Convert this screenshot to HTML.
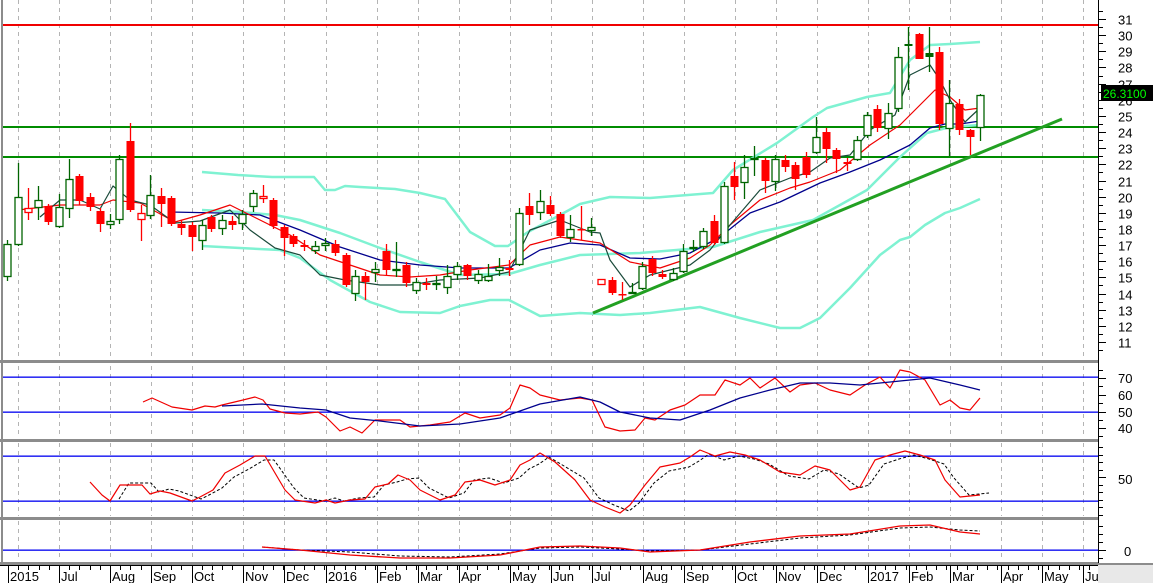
<!DOCTYPE html>
<html><head><meta charset="utf-8"><style>
html,body{margin:0;padding:0;background:#fff;}
svg{display:block;font-family:"Liberation Sans",Arial,sans-serif;}
</style></head><body>
<svg id="c" width="1153" height="583" xmlns="http://www.w3.org/2000/svg">
<rect width="1153" height="583" fill="#fff"/>
<g id="grid"></g>
<g id="lines"></g>
<g id="cand"></g>
<g id="axis"></g>
</svg>
<script>
const NS="http://www.w3.org/2000/svg";
function el(p,t,a,txt){const e=document.createElementNS(NS,t);for(const k in a)e.setAttribute(k,a[k]);if(txt!==undefined)e.textContent=txt;document.getElementById(p).appendChild(e);return e;}
function pl(pts,col,w,dash){el('lines','polyline',{points:pts.map(p=>p.join(',')).join(' '),fill:'none',stroke:col,'stroke-width':w,'stroke-dasharray':dash||'none','stroke-linejoin':'round'});}
// gridlines
const gx=[18,59,110,151,192,243,284,326,377,418,459,510,551,592,643,684,735,776,817,868,909,950,1001,1042,1083];
[[0,360],[366,437],[443,516],[521,561]].forEach(r=>{gx.forEach(x=>el('grid','line',{x1:x+.5,x2:x+.5,y1:r[0],y2:r[1],stroke:'#b4b4b4','stroke-dasharray':'4,4'}));});
// panel separators
[[361],[440],[518],[563]].forEach(y=>el('grid','rect',{x:0,y:y[0]-1,width:1153,height:3,fill:'#8c8c8c'}));
el('grid','rect',{x:1,y:0,width:2,height:583,fill:'#8c8c8c'});
// horizontal levels
el('lines','rect',{x:3,y:24,width:1095,height:2,fill:'#f00000'});
el('lines','rect',{x:3,y:126,width:1095,height:2,fill:'#008c00'});
el('lines','rect',{x:3,y:156,width:1095,height:2,fill:'#008c00'});
// indicator levels
[377,412,456,501,550].forEach(y=>el('lines','rect',{x:3,y:y-0.5,width:1095,height:1.3,fill:'#0000f0'}));
// bands
const aq='#7ff2d2';
pl([[202,172],[238,175],[272,177],[314,177],[325,190],[335,190],[345,186],[360,187],[395,189],[420,193],[445,199],[470,232],[495,246],[508,246],[528,232],[560,215],[580,204],[610,197],[650,198],[713,193],[733,170],[777,143],[813,117],[827,108],[867,97],[890,93],[910,60],[930,45],[950,44],[980,42]],aq,2.5);
pl([[202,210],[240,212],[275,215],[300,220],[340,233],[380,248],[420,262],[460,275],[509,274],[540,265],[580,255],[640,253],[713,247],[760,232],[813,220],[867,190],[900,157],[927,133],[950,127],[980,125]],aq,2.5);
pl([[202,246],[240,248],[280,250],[300,258],[330,280],[370,302],[400,312],[440,313],[460,306],[490,300],[509,300],[540,316],[580,313],[620,315],[650,313],[700,307],[740,318],[780,328],[800,328],[820,318],[850,288],[880,255],[900,240],[910,237],[925,225],[945,213],[960,208],[980,199]],aq,2.5);
// MAs
pl([[170,212],[220,213],[260,215],[300,230],[340,247],[380,260],[420,265],[460,268],[509,268],[540,250],[570,243],[600,245],[630,258],[660,259],[690,253],[720,237],[750,213],[780,202],[820,183],[850,172],[880,160],[910,145],[930,128],[945,124],[960,124],[980,121]],'#00008c',1.3);
pl([[18,210],[60,205],[100,205],[113,200],[140,203],[175,222],[200,215],[230,205],[260,220],[290,235],[320,255],[350,265],[380,275],[410,277],[440,275],[470,270],[509,265],[530,245],[560,237],[600,243],[630,262],[660,268],[690,258],[710,245],[730,225],[760,200],[790,188],[810,182],[840,170],[870,145],[900,125],[920,105],[935,90],[950,97],[965,110],[980,108]],'#f00000',1.2);
pl([[40,217],[60,200],[80,200],[100,209],[113,186],[130,200],[150,205],[175,223],[200,221],[230,210],[250,230],[275,248],[300,255],[320,275],[345,280],[380,285],[410,285],[440,280],[480,278],[509,272],[530,230],[560,220],[590,232],[600,233],[610,260],[630,287],[650,275],[690,265],[710,250],[730,225],[760,190],[790,178],[810,172],[830,158],[850,155],[870,130],[895,115],[910,75],[930,65],[940,80],[950,100],[965,122],[980,108]],'#1a4a3a',1.2);
// trendline
pl([[593,313],[1062,119]],'#22a022',3);
// candles
const C=[[7,244,277,240,281,'g'],[18,197,245,163,246,'g'],[28,208,213,188,220,'rh'],[38,200,208,186,220,'g'],[48,206,222,204,225,'r'],[59,207,227,194,228,'g'],[69,179,209,159,218,'g'],[79,176,201,174,205,'r'],[90,197,207,193,211,'r'],[100,211,224,208,232,'r'],[110,221,225,214,229,'g'],[119,159,220,155,224,'g'],[130,141,210,123,212,'r'],[141,213,220,205,241,'rh'],[150,195,216,175,219,'g'],[161,196,204,188,227,'r'],[171,198,224,196,226,'r'],[181,224,228,220,235,'r'],[192,225,237,222,251,'r'],[202,225,241,220,250,'g'],[211,217,229,215,232,'r'],[222,220,229,215,235,'g'],[232,221,225,216,230,'r'],[242,214,224,210,230,'g'],[253,193,207,190,212,'g'],[263,196,199,185,203,'rh'],[273,200,226,198,229,'r'],[284,227,238,225,256,'r'],[293,236,244,234,247,'r'],[304,245,247,240,251,'r'],[315,246,251,241,254,'g'],[325,243,246,238,251,'g'],[335,244,253,240,256,'r'],[346,255,285,253,287,'r'],[355,276,294,270,301,'g'],[365,276,282,272,300,'r'],[375,269,273,262,282,'g'],[386,251,270,244,276,'r'],[396,269,270,242,277,'g'],[406,265,283,262,287,'r'],[416,282,291,278,294,'g'],[426,283,285,278,290,'r'],[436,283,285,276,290,'g'],[447,276,288,265,294,'g'],[457,266,275,262,280,'g'],[467,265,276,264,280,'r'],[478,274,281,270,284,'g'],
[488,276,281,264,282,'g'],[499,267,271,258,276,'g'],[509,268,270,260,276,'r'],[519,213,265,208,266,'g'],[529,206,215,193,225,'r'],[540,201,213,190,220,'g'],[550,205,214,196,216,'r'],[560,214,236,212,238,'r'],[570,229,238,215,242,'g'],[581,229,230,206,240,'r'],[591,227,231,218,236,'g'],
[601,279,285,279,285,'rh'],[612,280,293,277,295,'r'],[622,294,295,282,300,'r'],[632,292,293,283,294,'g'],[642,266,289,262,290,'g'],[652,259,273,256,276,'r'],[662,274,277,270,279,'r'],[673,273,280,268,281,'g'],[683,251,272,244,273,'g'],[693,247,249,240,252,'g'],[703,231,247,228,249,'g'],[714,221,243,215,245,'r'],[724,186,243,182,244,'g'],[734,176,187,162,200,'r'],[744,167,183,155,199,'g'],[754,158,160,146,176,'g'],[765,160,181,158,193,'r'],[775,159,182,155,191,'g'],[785,160,167,155,172,'r'],[795,165,179,162,190,'r'],[806,157,175,152,178,'r'],[816,137,153,117,154,'g'],[826,132,149,128,163,'r'],[836,150,159,148,173,'r'],[847,162,164,158,171,'r'],[857,140,160,136,161,'g'],[867,115,136,112,138,'g'],[877,109,128,105,132,'r'],[888,113,129,103,139,'g'],[898,57,109,47,112,'g'],[908,44,46,27,90,'gf'],[919,34,59,33,59,'r'],[929,53,57,27,72,'gf'],[939,52,124,47,130,'r'],[949,103,129,80,156,'g'],[959,104,130,99,135,'r'],[970,130,137,129,155,'r'],[980,95,128,94,141,'g']];
C.forEach(c=>{const[x,t,b,wt,wb,k]=c;const col=(k[0]=='r')?'#ff0000':'#006400';
el('cand','line',{x1:x+.5,x2:x+.5,y1:wt,y2:wb,stroke:col,'stroke-width':1.3});
const h=Math.max(b-t,1.5);
if(k=='r'||k=='gf')el('cand','rect',{x:x-3.5,y:t,width:8,height:h,fill:col});
else el('cand','rect',{x:x-3,y:t+.5,width:7,height:Math.max(h-1,1),fill:'#fff',stroke:col,'stroke-width':1.3});});
// RSI
pl([[143,402],[152,398],[172,407],[192,410],[205,406],[215,407],[222,405],[243,400],[255,397],[263,400],[270,409],[285,413],[300,414],[318,412],[326,417],[340,431],[350,427],[362,433],[375,420],[390,420],[400,420],[410,427],[430,425],[450,422],[465,413],[480,418],[500,415],[510,408],[520,385],[530,388],[540,395],[560,400],[580,398],[592,400],[605,427],[620,431],[635,430],[645,418],[655,420],[670,410],[685,405],[700,395],[715,395],[725,380],[740,385],[750,378],[760,388],[775,378],[790,392],[800,385],[815,383],[830,390],[850,395],[865,385],[880,377],[890,388],[900,370],[910,372],[925,380],[940,405],[950,400],[960,408],[970,410],[980,398]],'#f00000',1.2);
pl([[222,406],[262,404],[300,408],[326,410],[350,418],[380,421],[420,426],[460,424],[500,418],[540,404],[580,397],[600,402],[620,412],[650,418],[680,420],[710,410],[740,398],[770,390],[800,383],[830,383],[860,385],[900,381],[930,378],[960,385],[980,390]],'#00008c',1.3);
// Stoch
const S=[[90,482],[102,495],[110,501],[120,485],[142,485],[150,494],[160,491],[170,493],[192,501],[200,497],[213,490],[225,473],[240,465],[255,456],[265,456],[285,490],[295,500],[315,503],[326,500],[335,503],[350,500],[365,499],[375,487],[388,484],[398,475],[410,480],[420,490],[440,500],[455,495],[465,482],[480,480],[495,485],[510,480],[520,465],[530,460],[540,453],[555,462],[575,480],[590,500],[605,507],[620,513],[630,505],[645,485],[660,467],[680,463],[690,457],[700,450],[715,456],[730,452],[745,455],[760,460],[780,472],[800,475],[815,466],[830,470],[850,490],[860,487],[875,460],[890,455],[905,451],[920,455],[935,460],[945,480],[960,497],[980,495]];
pl(S.slice(2).map(p=>[p[0]+9,p[1]+(p[1]<480?4:-2)]),'#000',1,'3,2');
pl(S,'#f00000',1.2);
// MACD
pl([[262,547],[300,550],[350,552],[400,556],[450,557],[500,554],[540,548],[580,547],[620,549],[650,551],[700,550],[750,544],[800,538],[850,535],[900,528],[930,527],[960,530],[980,531]],'#000',1,'3,2');
pl([[262,547],[300,550],[350,555],[400,558],[450,558],[500,555],[540,547],[580,546],[620,548],[650,552],[700,550],[750,542],[800,536],[850,534],[900,526],[930,525],[960,532],[980,534]],'#f00000',1.3);
// right axis
el('axis','rect',{x:1098,y:0,width:55,height:563,fill:'#fff'});
el('axis','line',{x1:1098.5,x2:1098.5,y1:0,y2:563,stroke:'#000'});
for(let p=31.5;p>=10.5;p-=0.5){const y=Math.round(19+(31-p)*16.15)+.5;if(y<0||y>358)continue;el('axis','line',{x1:1098,x2:p%1==0?1106:1103,y1:y,y2:y,stroke:'#000'});if(p%1==0&&p<=31&&p>=11)el('axis','text',{x:1118,y:y+5,'font-size':13},String(p));}
[[370,0],[378,1],[386,0],[395,1],[403,0],[412,1],[420,0],[428,1],[436,0]].forEach(t=>el('axis','line',{x1:1098,x2:t[1]?1106:1103,y1:t[0]+.5,y2:t[0]+.5,stroke:'#000'}));
[[70,378],[60,395],[50,412],[40,428]].forEach(t=>el('axis','text',{x:1118,y:t[1]+5,'font-size':13},String(t[0])));
for(let y=447;y<518;y+=7.5)el('axis','line',{x1:1098,x2:Math.abs(y-479)<4?1106:1103,y1:Math.round(y)+.5,y2:Math.round(y)+.5,stroke:'#000'});
el('axis','text',{x:1118,y:484,'font-size':13},'50');
for(let y=526;y<562;y+=8)el('axis','line',{x1:1098,x2:1103,y1:y+.5,y2:y+.5,stroke:'#000'});
el('axis','line',{x1:1098,x2:1106,y1:550.5,y2:550.5,stroke:'#000'});
el('axis','text',{x:1124,y:556,'font-size':13},'0');
el('axis','rect',{x:1101,y:85,width:52,height:16,fill:'#000'});
el('axis','text',{x:1103,y:98,'font-size':12,fill:'#00ff00'},'26.3100');
// bottom axis
el('axis','rect',{x:0,y:565,width:1098,height:18,fill:'#fff'});
el('axis','rect',{x:1098,y:565,width:55,height:18,fill:'#e8e8e8'});
el('axis','line',{x1:0,x2:1098,y1:565.5,y2:565.5,stroke:'#000'});
for(let x=8;x<1098;x+=10.2)el('axis','line',{x1:Math.round(x)+.5,x2:Math.round(x)+.5,y1:565,y2:570,stroke:'#000'});
const L=[['2015',8],['Jul',59],['Aug',110],['Sep',151],['Oct',192],['Nov',243],['Dec',284],['2016',326],['Feb',377],['Mar',418],['Apr',459],['May',510],['Jun',551],['Jul',592],['Aug',643],['Sep',684],['Oct',735],['Nov',776],['Dec',817],['2017',868],['Feb',909],['Mar',950],['Apr',1001],['May',1042],['Ju',1083]];
L.forEach(l=>{el('axis','line',{x1:l[1]+.5,x2:l[1]+.5,y1:565,y2:583,stroke:'#000'});el('axis','text',{x:l[1]+2,y:581,'font-size':13},l[0]);});
</script>
</body></html>
